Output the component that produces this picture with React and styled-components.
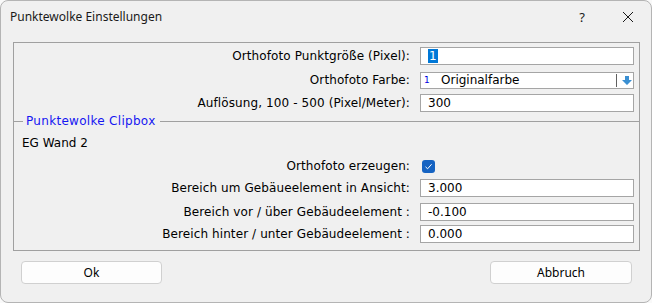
import React from "react";
import styled, { createGlobalStyle } from "styled-components";

const GlobalStyle = createGlobalStyle`
  html, body {
    margin: 0;
    padding: 0;
    background: #f9f9f9;
  }
  * {
    box-sizing: border-box;
  }
`;

const Window = styled.div`
  width: 652px;
  height: 303px;
  background: #f0f0f0;
  border: 1px solid #b4b4b4;
  border-radius: 8px;
  display: flex;
  flex-direction: column;
  overflow: hidden;
  font-family: "DejaVu Sans", Tahoma, sans-serif;
  font-size: 12px;
  color: #000;
`;

const TitleBar = styled.div`
  height: 31px;
  display: flex;
  align-items: center;
  padding-left: 9px;
  font-family: "Noto Sans", "Segoe UI", sans-serif;
  font-size: 12px;
  color: #1a1a1a;
`;

const Title = styled.div`
  flex: 1;
`;

const TitleButton = styled.div`
  width: 46px;
  height: 31px;
  display: flex;
  align-items: center;
  justify-content: center;
  font-size: 13px;
`;

const Panel = styled.div`
  margin: 10px 11px 0 12px;
  height: 209px;
  border: 1px solid #a0a0a0;
  padding: 4px 6px 0 0;
`;

const Row = styled.div`
  display: grid;
  grid-template-columns: 396px 214px;
  column-gap: 10px;
  align-items: center;
  height: 18px;
  margin-top: ${(p) => p.$gap || 0}px;
`;

const Label = styled.div`
  text-align: right;
  white-space: nowrap;
  letter-spacing: 0.1px;
`;

const Field = styled.div`
  height: 18px;
  background: #fff;
  border: 1px solid #a5a5a5;
  display: flex;
  align-items: center;
  padding-left: 7px;
  white-space: nowrap;
`;

const Selected = styled.span`
  background: #0078d7;
  color: #fff;
  padding: 0 1px;
  line-height: 14px;
`;

const Combo = styled(Field)`
  height: 17px;
  padding-left: 3px;
`;

const ComboIndex = styled.span`
  color: #0000e0;
  font-size: 9px;
  width: 17px;
`;

const ComboText = styled.span`
  flex: 1;
`;

const ComboDivider = styled.div`
  width: 1px;
  height: 13px;
  background: #606060;
  margin-right: 3px;
`;

const ComboArrow = styled.div`
  width: 13px;
  display: flex;
  justify-content: center;
`;

const Legend = styled.div`
  display: flex;
  align-items: center;
  height: 14px;
  margin: 2px -6px 0 -1px;
  &::before {
    content: "";
    width: 10px;
    border-top: 1px solid #a0a0a0;
  }
  &::after {
    content: "";
    flex: 1;
    border-top: 1px solid #a0a0a0;
  }
`;

const LegendText = styled.span`
  color: #1616f2;
  padding: 0 4px 0 3px;
  letter-spacing: 0.3px;
`;

const Caption = styled.div`
  padding-left: 8px;
  height: 16px;
  margin-top: 7px;
  display: flex;
  align-items: center;
`;

const Check = styled.div`
  width: 13px;
  height: 13px;
  margin-left: 2px;
  border-radius: 3px;
  background: #1563c2;
  display: flex;
  align-items: center;
  justify-content: center;
`;

const Footer = styled.div`
  display: flex;
  justify-content: space-between;
  padding: 10px 19px 0 20px;
`;

const Button = styled.div`
  width: ${(p) => p.$w}px;
  height: 23px;
  background: #fdfdfd;
  border: 1px solid #d0d0d0;
  border-radius: 4px;
  display: flex;
  align-items: center;
  justify-content: center;
  font-family: "Noto Sans", "Segoe UI", sans-serif;
  font-size: 12px;
`;

export default function App() {
  return (
    <>
      <GlobalStyle />
      <Window>
        <TitleBar>
          <Title>Punktewolke Einstellungen</Title>
          <TitleButton>?</TitleButton>
          <TitleButton>
            <svg width="12" height="12" viewBox="0 0 12 12">
              <path d="M1 1 L11 11 M11 1 L1 11" stroke="#1a1a1a" strokeWidth="1" fill="none" />
            </svg>
          </TitleButton>
        </TitleBar>
        <Panel>
          <Row>
            <Label>Orthofoto Punktgröße (Pixel):</Label>
            <Field>
              <Selected>1</Selected>
            </Field>
          </Row>
          <Row $gap={6}>
            <Label>Orthofoto Farbe:</Label>
            <Combo>
              <ComboIndex>1</ComboIndex>
              <ComboText>Originalfarbe</ComboText>
              <ComboDivider />
              <ComboArrow>
                <svg width="10" height="9" viewBox="0 0 10 9">
                  <path d="M3 0 H7 V4 H10 L5 9 L0 4 H3 Z" fill="#3a8fd2" />
                </svg>
              </ComboArrow>
            </Combo>
          </Row>
          <Row $gap={5}>
            <Label>Auflösung, 100 - 500 (Pixel/Meter):</Label>
            <Field>300</Field>
          </Row>
          <Legend>
            <LegendText>Punktewolke Clipbox</LegendText>
          </Legend>
          <Caption>EG Wand 2</Caption>
          <Row $gap={6}>
            <Label>Orthofoto erzeugen:</Label>
            <Check>
              <svg width="9" height="9" viewBox="0 0 9 9">
                <path d="M1.5 4.8 L3.6 6.8 L7.6 2.2" stroke="#fff" strokeWidth="1" fill="none" />
              </svg>
            </Check>
          </Row>
          <Row $gap={4}>
            <Label>Bereich um Gebäueelement in Ansicht:</Label>
            <Field>3.000</Field>
          </Row>
          <Row $gap={6}>
            <Label>Bereich vor / über Gebäudeelement :</Label>
            <Field>-0.100</Field>
          </Row>
          <Row $gap={4}>
            <Label>Bereich hinter / unter Gebäudeelement :</Label>
            <Field>0.000</Field>
          </Row>
        </Panel>
        <Footer>
          <Button $w={141}>Ok</Button>
          <Button $w={142}>Abbruch</Button>
        </Footer>
      </Window>
    </>
  );
}
